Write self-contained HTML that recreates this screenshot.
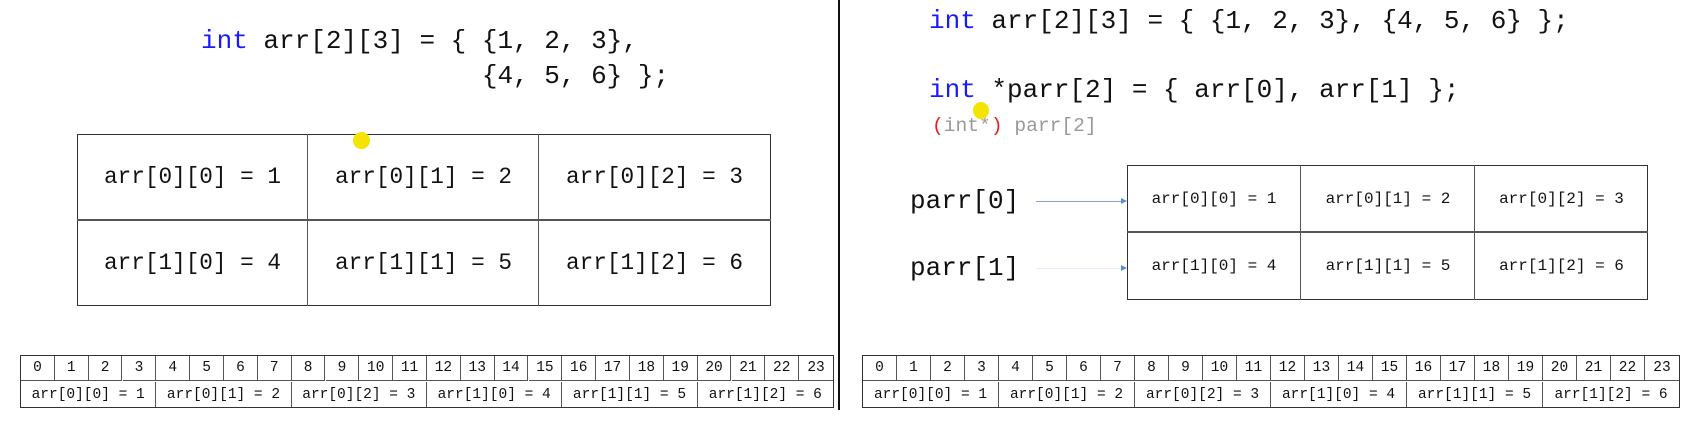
<!DOCTYPE html>
<html><head><meta charset="utf-8"><style>
*{margin:0;padding:0;box-sizing:border-box}
body{width:1686px;height:422px;background:#fff;position:relative;overflow:hidden;font-family:"Liberation Mono",monospace;color:#111}
.a{position:absolute;white-space:pre}
.code{font-size:26px;line-height:30px}
.kw{color:#1a1aff}
.g{position:absolute;border:1.5px solid #333}
.cell{position:absolute;display:flex;align-items:center;justify-content:center;white-space:pre}
.vl{position:absolute;background:#555;width:1px}
.hl{position:absolute;background:#555;height:1.5px}
.mt{position:absolute;border:1px solid #333;font-family:"Liberation Mono",monospace;font-size:14.5px}
.mt .cell{border-right:1px solid #555;height:25px}
</style></head><body>
<div class="a code" style="left:201px;top:26px"><span class="kw">int</span> arr[2][3] = { {1, 2, 3},</div>
<div class="a code" style="left:201px;top:61px">                  {4, 5, 6} };</div>

<div class="g" style="left:77px;top:134px;width:694px;height:172px"></div>
<div class="hl" style="left:77px;top:219px;width:694px"></div>
<div class="vl" style="left:307px;top:134px;height:172px"></div>
<div class="vl" style="left:538px;top:134px;height:172px"></div>
<div style="font-size:22.7px">
<div class="cell" style="left:77px;top:134px;width:231px;height:86px">arr[0][0] = 1</div>
<div class="cell" style="left:308px;top:134px;width:231px;height:86px">arr[0][1] = 2</div>
<div class="cell" style="left:539px;top:134px;width:231px;height:86px">arr[0][2] = 3</div>
<div class="cell" style="left:77px;top:220px;width:231px;height:86px">arr[1][0] = 4</div>
<div class="cell" style="left:308px;top:220px;width:231px;height:86px">arr[1][1] = 5</div>
<div class="cell" style="left:539px;top:220px;width:231px;height:86px">arr[1][2] = 6</div>
</div>
<div style="position:absolute;left:353px;top:132px;width:17px;height:17px;border-radius:50%;background:#f5e400"></div>

<div style="position:absolute;left:838px;top:0;width:2px;height:410px;background:#111"></div>

<div class="a code" style="left:929px;top:6px"><span class="kw">int</span> arr[2][3] = { {1, 2, 3}, {4, 5, 6} };</div>
<div class="a code" style="left:929px;top:75px"><span class="kw">int</span> *parr[2] = { arr[0], arr[1] };</div>
<div class="a" style="left:932px;top:115px;font-size:19.6px;color:#999"><span style="color:#e02020">(</span>int*<span style="color:#e02020">)</span> parr[2]</div>
<div style="position:absolute;left:973px;top:102px;width:16px;height:17px;border-radius:50%;background:#f5e400"></div>

<div class="a" style="left:910px;top:186px;font-size:26px;line-height:30px">parr[0]</div>
<div class="a" style="left:910px;top:253px;font-size:26px;line-height:30px">parr[1]</div>
<div style="position:absolute;left:1036px;top:201px;width:86px;height:1px;background:#7fa7d0"></div>
<div style="position:absolute;left:1121px;top:198px;border-left:6px solid #5b8fd0;border-top:3.5px solid transparent;border-bottom:3.5px solid transparent"></div>
<div style="position:absolute;left:1036px;top:268px;width:86px;height:1px;background:#e4eef8"></div>
<div style="position:absolute;left:1121px;top:265px;border-left:6px solid #5b8fd0;border-top:3.5px solid transparent;border-bottom:3.5px solid transparent"></div>

<div class="g" style="left:1127px;top:165px;width:521px;height:135px"></div>
<div class="hl" style="left:1127px;top:231px;width:521px"></div>
<div class="vl" style="left:1300px;top:165px;height:135px"></div>
<div class="vl" style="left:1474px;top:165px;height:135px"></div>
<div style="font-size:16px">
<div class="cell" style="left:1127px;top:165px;width:174px;height:67px">arr[0][0] = 1</div>
<div class="cell" style="left:1301px;top:165px;width:174px;height:67px">arr[0][1] = 2</div>
<div class="cell" style="left:1475px;top:165px;width:173px;height:67px">arr[0][2] = 3</div>
<div class="cell" style="left:1127px;top:232px;width:174px;height:67px">arr[1][0] = 4</div>
<div class="cell" style="left:1301px;top:232px;width:174px;height:67px">arr[1][1] = 5</div>
<div class="cell" style="left:1475px;top:232px;width:173px;height:67px">arr[1][2] = 6</div>
</div>

<div id="t1" class="mt" style="left:20px;top:355px;width:814px;height:53px"></div>
<div id="t2" class="mt" style="left:862px;top:355px;width:818px;height:53px"></div>
<script>
function build(id,w){
 var t=document.getElementById(id),cw=(w-2)/24,h='';
 for(var i=0;i<24;i++)h+='<div class="cell" style="left:'+(i*cw)+'px;top:0;width:'+cw+'px;border-bottom:1px solid #555;'+(i==23?'border-right:none;':'')+'">'+i+'</div>';
 var L=['arr[0][0] = 1','arr[0][1] = 2','arr[0][2] = 3','arr[1][0] = 4','arr[1][1] = 5','arr[1][2] = 6'];
 for(var j=0;j<6;j++)h+='<div class="cell" style="left:'+(j*cw*4)+'px;top:26px;width:'+(cw*4)+'px;'+(j==5?'border-right:none;':'')+'">'+L[j].replace(/ /g,'&nbsp;')+'</div>';
 t.innerHTML=h;
}
build('t1',814);build('t2',818);
</script>
</body></html>
